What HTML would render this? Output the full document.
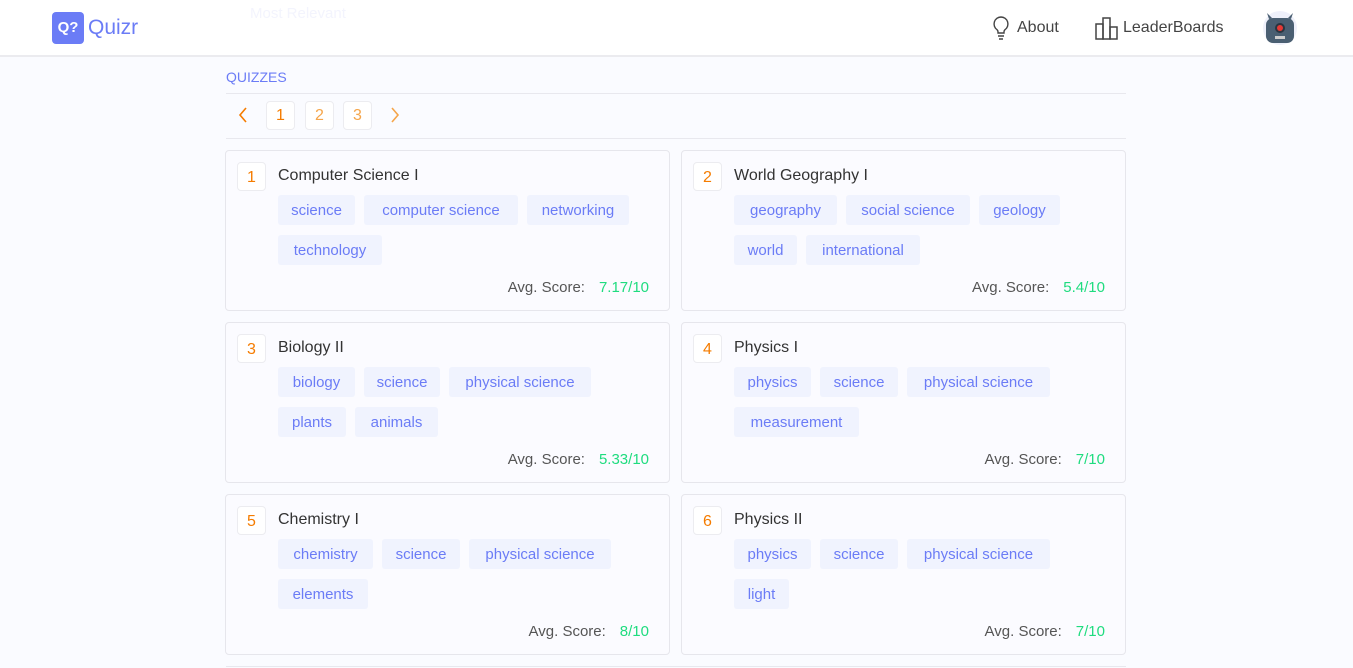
<!DOCTYPE html>
<html><head><meta charset="utf-8">
<style>
*{box-sizing:border-box;margin:0;padding:0}
body{width:1353px;height:668px;overflow:hidden;background:#fafbff;font-family:"Liberation Sans",sans-serif;position:relative}
.hdr{position:absolute;left:0;top:0;width:1353px;height:57px;background:#fff;border-bottom:2px solid #ebebef}
.logo{position:absolute;left:52px;top:12px;width:32px;height:32px;background:#6b7cf6;border-radius:4px;color:#fff;font-weight:bold;font-size:15px;text-align:center;line-height:32px}
.brand{position:absolute;left:88px;top:16px;font-size:21px;color:#6b7cf6}
.ghost{position:absolute;left:250px;top:5px;font-size:15px;color:#f3f4fd}
.nav{position:absolute;top:19px;font-size:16px;color:#444}
.title{position:absolute;left:226px;top:69px;font-size:14px;color:#6b7cf6}
.line{position:absolute;left:226px;width:900px;height:1px;background:#e8e8ee}
.pg{position:absolute;top:101px;width:29px;height:29px;border:1px solid #ececf0;border-radius:4px;background:#fff;color:#f5a54a;text-align:center;line-height:28px;font-size:16px}
.card{position:absolute;width:445px;height:161px;background:#fbfbff;border:1px solid #e6e6ec;border-radius:4px}
.num{position:absolute;left:11px;top:11px;width:29px;height:29px;background:#fff;border:1px solid #ececf0;border-radius:4px;color:#f57c00;text-align:center;line-height:29px;font-size:16px}
.ct{position:absolute;left:52px;top:16px;font-size:16px;color:#333}
.tags{position:absolute;left:52px;top:44px;width:360px;font-size:0}
.tag{display:inline-block;height:30px;line-height:31px;background:#f0f3fe;color:#6b7cf6;font-size:15px;text-align:center;border-radius:3px;margin:0 9px 10px 0;vertical-align:top;white-space:nowrap}
.sc{position:absolute;right:20px;top:128px;font-size:15px;color:#555}
.sc b{font-weight:normal;color:#1fdc7f;margin-left:14px}
</style></head><body>
<div class="hdr">
<div class="logo">Q?</div>
<div class="brand">Quizr</div>
<div class="ghost">Most Relevant</div>
<svg style="position:absolute;left:991px;top:15px" width="20" height="26" viewBox="0 0 20 26" fill="none" stroke="#444" stroke-width="1.4"><path d="M10 2a7 7 0 0 0-4 12.7c.7.6 1 1.4 1 2.3v1h6v-1c0-.9.3-1.7 1-2.3A7 7 0 0 0 10 2z"/><path d="M7 21h6M8 24h4"/></svg>
<div class="nav" style="left:1017px">About</div>
<svg style="position:absolute;left:1095px;top:16px" width="24" height="24" viewBox="0 0 24 24" fill="none" stroke="#444" stroke-width="1.5"><rect x="1" y="8" width="7" height="15"/><rect x="8" y="2" width="7" height="21"/><rect x="15" y="11" width="7" height="12"/></svg>
<div class="nav" style="left:1123px">LeaderBoards</div>
<svg style="position:absolute;left:1263px;top:11px" width="34" height="34" viewBox="0 0 34 34"><circle cx="17" cy="17" r="17" fill="#eef0fa"/><rect x="3" y="7" width="28" height="25" rx="7" fill="#4a5f72"/><path d="M6 8l-2-6 5 5M28 8l2-6-5 5" fill="#4a5f72"/><circle cx="17" cy="17" r="5" fill="#2b3540"/><circle cx="17" cy="17" r="3" fill="#e53935"/><rect x="12" y="25" width="10" height="3" fill="#ccc"/></svg>
</div>
<div class="title">QUIZZES</div>
<div class="line" style="top:93px"></div>
<svg style="position:absolute;left:236px;top:106px" width="14" height="18" viewBox="0 0 14 18"><path d="M10 2L4 9l6 7" stroke="#f57c00" stroke-width="1.6" fill="none"/></svg>
<div class="pg" style="left:266px;color:#f57c00">1</div>
<div class="pg" style="left:305px">2</div>
<div class="pg" style="left:343px">3</div>
<svg style="position:absolute;left:388px;top:106px" width="14" height="18" viewBox="0 0 14 18"><path d="M4 2l6 7-6 7" stroke="#f5a54a" stroke-width="1.6" fill="none"/></svg>
<div class="line" style="top:138px"></div>

<div class="card" style="left:225px;top:150px"><div class="num">1</div><div class="ct">Computer Science I</div>
<div class="tags"><span class="tag" style="width:77px">science</span><span class="tag" style="width:154px">computer science</span><span class="tag" style="width:102px">networking</span><span class="tag" style="width:104px">technology</span></div>
<div class="sc">Avg. Score:<b>7.17/10</b></div></div>

<div class="card" style="left:681px;top:150px"><div class="num">2</div><div class="ct">World Geography I</div>
<div class="tags"><span class="tag" style="width:103px">geography</span><span class="tag" style="width:124px">social science</span><span class="tag" style="width:81px">geology</span><span class="tag" style="width:63px">world</span><span class="tag" style="width:114px">international</span></div>
<div class="sc">Avg. Score:<b>5.4/10</b></div></div>

<div class="card" style="left:225px;top:322px"><div class="num">3</div><div class="ct">Biology II</div>
<div class="tags"><span class="tag" style="width:77px">biology</span><span class="tag" style="width:76px">science</span><span class="tag" style="width:142px">physical science</span><span class="tag" style="width:68px">plants</span><span class="tag" style="width:83px">animals</span></div>
<div class="sc">Avg. Score:<b>5.33/10</b></div></div>

<div class="card" style="left:681px;top:322px"><div class="num">4</div><div class="ct">Physics I</div>
<div class="tags"><span class="tag" style="width:77px">physics</span><span class="tag" style="width:78px">science</span><span class="tag" style="width:143px">physical science</span><span class="tag" style="width:125px">measurement</span></div>
<div class="sc">Avg. Score:<b>7/10</b></div></div>

<div class="card" style="left:225px;top:494px"><div class="num">5</div><div class="ct">Chemistry I</div>
<div class="tags"><span class="tag" style="width:95px">chemistry</span><span class="tag" style="width:78px">science</span><span class="tag" style="width:142px">physical science</span><span class="tag" style="width:90px">elements</span></div>
<div class="sc">Avg. Score:<b>8/10</b></div></div>

<div class="card" style="left:681px;top:494px"><div class="num">6</div><div class="ct">Physics II</div>
<div class="tags"><span class="tag" style="width:77px">physics</span><span class="tag" style="width:78px">science</span><span class="tag" style="width:143px">physical science</span><span class="tag" style="width:55px">light</span></div>
<div class="sc">Avg. Score:<b>7/10</b></div></div>

<div class="line" style="top:666px"></div>
</body></html>
